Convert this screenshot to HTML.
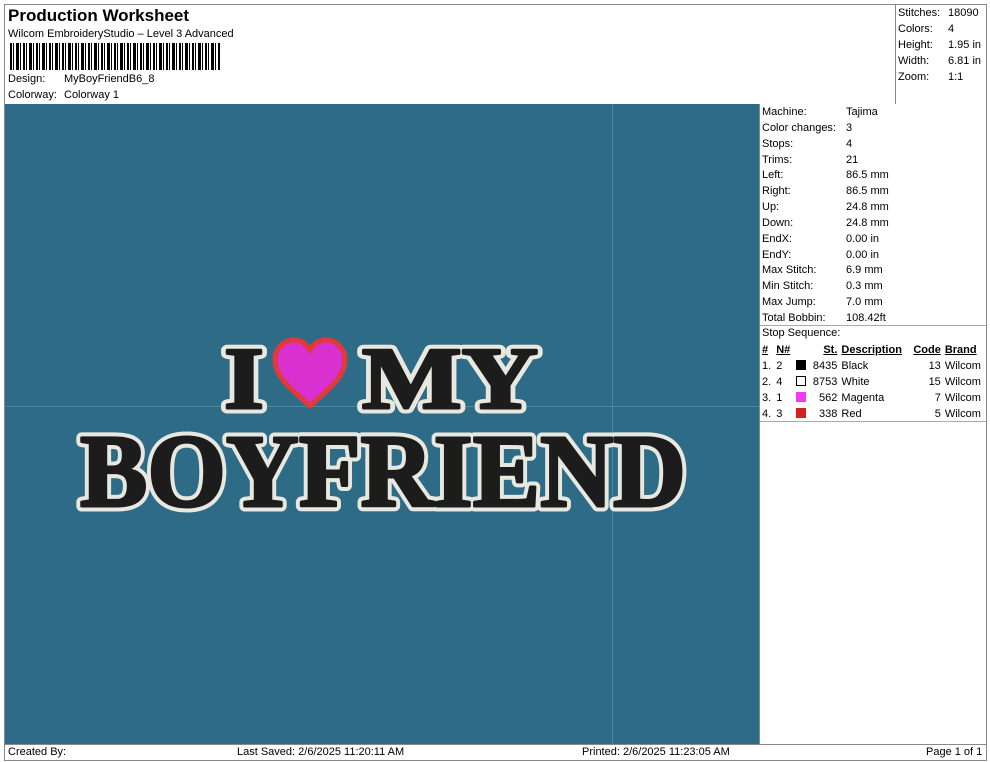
<!DOCTYPE html>
<html><head><meta charset="utf-8"><style>
*{margin:0;padding:0;box-sizing:border-box}
body{width:990px;height:762px;background:#fff;position:relative;font-family:"Liberation Sans",Arial,sans-serif;font-size:11px;color:#000;overflow:hidden}
.a{position:absolute;white-space:nowrap}
.bd{position:absolute;border:1px solid #888}
.r{position:absolute;left:762px;height:16px;line-height:16px;white-space:nowrap;width:220px}
.r span{position:absolute;left:84px;white-space:nowrap}
table{position:absolute;left:760px;top:342px;width:226px;border-collapse:collapse;font-size:11px}
td{height:16px;padding:0 2px;line-height:16px;white-space:nowrap}
th{font-weight:bold;text-decoration:underline;padding:0 2px;height:16px;line-height:16px;white-space:nowrap}
.sw{display:inline-block;width:10px;height:10px;border:1px solid #000;vertical-align:-1px}
</style></head><body>
<div class="bd" style="left:4px;top:4px;width:983px;height:757px"></div>
<div class="a" style="left:895px;top:4px;width:1px;height:100px;background:#888"></div>
<div class="a" style="left:8px;top:6px;font-size:17px;font-weight:bold">Production Worksheet</div>
<div class="a" style="left:8px;top:28px">Wilcom EmbroideryStudio – Level 3 Advanced</div>
<div class="a" style="left:10px;top:43px;width:210px;height:27px;background:repeating-linear-gradient(90deg,#000 0 2px,#fff 2px 3px,#000 3px 4px,#fff 4px 6px,#000 6px 9px,#fff 9px 10px,#000 10px 11px,#fff 11px 13px)"></div>
<div class="a" style="left:8px;top:73px">Design:</div><div class="a" style="left:64px;top:73px">MyBoyFriendB6_8</div>
<div class="a" style="left:8px;top:89px">Colorway:</div><div class="a" style="left:64px;top:89px">Colorway 1</div>
<div class="a" style="left:898px;top:5px;line-height:16px">Stitches:<br>Colors:<br>Height:<br>Width:<br>Zoom:</div>
<div class="a" style="left:948px;top:5px;line-height:16px">18090<br>4<br>1.95 in<br>6.81 in<br>1:1</div>
<div class="a" style="left:5px;top:104px;width:755px;height:641px;background:#2e6b87"></div>
<div class="a" style="left:5px;top:406px;width:755px;height:1px;background:#4a88a2"></div>
<div class="a" style="left:612px;top:104px;width:1px;height:641px;background:#4a88a2"></div>
<svg class="a" style="left:5px;top:104px" width="755" height="641">
<g font-family="Liberation Serif,serif" font-weight="bold" fill="#1c1c1c" stroke="#e8e8e0" stroke-width="11" stroke-linejoin="round" style="paint-order:stroke">
<text x="219" y="304" font-size="88" textLength="40" lengthAdjust="spacingAndGlyphs">I</text>
<text x="357" y="304" font-size="88" textLength="176" lengthAdjust="spacingAndGlyphs">MY</text>
<text x="75" y="402" font-size="104" textLength="606" lengthAdjust="spacingAndGlyphs">BOYFRIEND</text>
</g>
<g font-family="Liberation Serif,serif" font-weight="bold" fill="#1c1c1c" stroke="#1c1c1c" stroke-width="3" stroke-linejoin="round">
<text x="219" y="304" font-size="88" textLength="40" lengthAdjust="spacingAndGlyphs">I</text>
<text x="357" y="304" font-size="88" textLength="176" lengthAdjust="spacingAndGlyphs">MY</text>
<text x="75" y="402" font-size="104" textLength="606" lengthAdjust="spacingAndGlyphs">BOYFRIEND</text>
</g>
<path d="M305 302 C290 288 270 274 270 256 C270 244 279 236 289 236 C297 236 302 241 305 246 C308 241 313 236 321 236 C331 236 340 244 340 256 C340 274 320 288 305 302Z" fill="#d930d0" stroke="#e03a3a" stroke-width="5"/>
</svg>
<div class="a" style="left:759px;top:104px;width:1px;height:641px;background:#888"></div>
<div class="r" style="top:104px">Machine:<span>Tajima</span></div>
<div class="r" style="top:120px">Color changes:<span>3</span></div>
<div class="r" style="top:136px">Stops:<span>4</span></div>
<div class="r" style="top:152px">Trims:<span>21</span></div>
<div class="r" style="top:167px">Left:<span>86.5 mm</span></div>
<div class="r" style="top:183px">Right:<span>86.5 mm</span></div>
<div class="r" style="top:199px">Up:<span>24.8 mm</span></div>
<div class="r" style="top:215px">Down:<span>24.8 mm</span></div>
<div class="r" style="top:231px">EndX:<span>0.00 in</span></div>
<div class="r" style="top:247px">EndY:<span>0.00 in</span></div>
<div class="r" style="top:262px">Max Stitch:<span>6.9 mm</span></div>
<div class="r" style="top:278px">Min Stitch:<span>0.3 mm</span></div>
<div class="r" style="top:294px">Max Jump:<span>7.0 mm</span></div>
<div class="r" style="top:310px">Total Bobbin:<span>108.42ft</span></div>
<div class="a" style="left:760px;top:325px;width:226px;height:1px;background:#aaa"></div>
<div class="r" style="top:325px">Stop Sequence:</div>
<table>
<tr><th style="text-align:left">#</th><th style="text-align:left">N#</th><th></th><th style="text-align:right">St.</th><th style="text-align:left">Description</th><th style="text-align:right">Code</th><th style="text-align:left">Brand</th></tr>
<tr><td>1.</td><td>2</td><td><span class="sw" style="background:#000"></span></td><td style="text-align:right">8435</td><td>Black</td><td style="text-align:right">13</td><td>Wilcom</td></tr>
<tr><td>2.</td><td>4</td><td><span class="sw" style="background:#fff"></span></td><td style="text-align:right">8753</td><td>White</td><td style="text-align:right">15</td><td>Wilcom</td></tr>
<tr><td>3.</td><td>1</td><td><span class="sw" style="background:#f03cf0;border-color:#f03cf0"></span></td><td style="text-align:right">562</td><td>Magenta</td><td style="text-align:right">7</td><td>Wilcom</td></tr>
<tr><td>4.</td><td>3</td><td><span class="sw" style="background:#d42020;border-color:#d42020"></span></td><td style="text-align:right">338</td><td>Red</td><td style="text-align:right">5</td><td>Wilcom</td></tr>
</table>
<div class="a" style="left:760px;top:421px;width:226px;height:1px;background:#aaa"></div>
<div class="a" style="left:4px;top:744px;width:983px;height:1px;background:#888"></div>
<div class="a" style="left:8px;top:746px">Created By:</div>
<div class="a" style="left:237px;top:746px">Last Saved: 2/6/2025 11:20:11 AM</div>
<div class="a" style="left:582px;top:746px">Printed: 2/6/2025 11:23:05 AM</div>
<div class="a" style="left:926px;top:746px">Page 1 of 1</div>
</body></html>
